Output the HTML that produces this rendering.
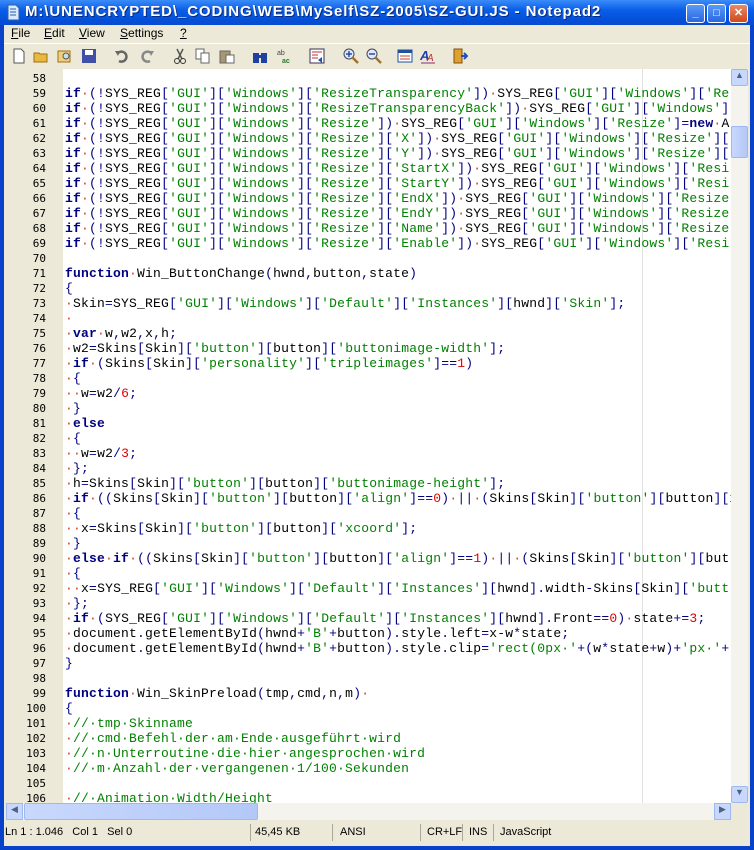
<!DOCTYPE html><html><head><meta charset="utf-8"><style>
*{margin:0;padding:0;box-sizing:border-box}
body{width:754px;height:850px;overflow:hidden;background:#0842c8;font-family:"Liberation Sans",sans-serif;position:relative}
#title{position:absolute;left:0;top:0;width:754px;height:25px;background:linear-gradient(#3a8cf8,#0a5ee8 40%,#0450d8 80%,#0a4ad0);color:#fff;font:bold 15px "Liberation Sans",sans-serif;letter-spacing:0.9px}
#title .t{position:absolute;left:25px;top:3px;text-shadow:1px 1px #0a2a80;white-space:nowrap}
.tb{position:absolute;top:4px;width:19px;height:19px;border:1px solid #fff;border-radius:3px;background:linear-gradient(#5a9af8,#2a66e0);color:#fff;font:bold 11px sans-serif;text-align:center;line-height:17px;letter-spacing:0}
#win{position:absolute;left:4px;top:25px;width:746px;height:821px;background:#ece9d8}
#menu{position:absolute;left:0;top:0;width:746px;height:17px;font-size:12px;color:#000}
#menu span{position:absolute;top:1px}
#tool{position:absolute;left:0;top:18px;width:746px;height:26px;border-top:1px solid #fff}
.ic{position:absolute;top:4px;width:16px;height:16px}
#ed{position:absolute;left:2px;top:44px;width:742px;height:734px;background:#fff;overflow:hidden}
#gut{position:absolute;left:0;top:0;width:57px;height:734px;background:#ece9d8}
#edge{position:absolute;left:636px;top:0;width:1px;height:734px;background:#e0e0e0}
.ln{position:absolute;left:0;width:40px;text-align:right;font:11px "DejaVu Sans Mono","Liberation Mono",monospace;color:#000;height:15px;line-height:15px}
.cl{position:absolute;left:59px;white-space:pre;font:13px "Liberation Mono",monospace;letter-spacing:0.2px;height:15px;line-height:15px;color:#000}
.k{color:#000080;font-weight:bold}.o{color:#000080}.s{color:#008000}.n{color:#e00000}
i{font-style:normal;color:#d04020}
#vs{position:absolute;left:725px;top:0;width:17px;height:734px;background:#f4f3ee}
#hs{position:absolute;left:2px;top:778px;width:725px;height:17px;background:#f4f3ee}
.sb{position:absolute;background:linear-gradient(90deg,#c8d8fc,#b4c8f8);border:1px solid #a0b8f0;border-radius:2px}
#st{position:absolute;left:0;top:797px;width:746px;height:21px;font-size:11px;color:#000}
#st span{position:absolute;top:4px}
#st b{position:absolute;top:2px;width:1px;height:17px;background:#aca899;font-weight:normal}
</style></head><body>
<div id="title"><svg style="position:absolute;left:5px;top:4px" width="16" height="17"><path d="M3 1h8l3 3v12H3z" fill="#d8e8ff" stroke="#3060a0"/><path d="M5 5h6M5 8h6M5 11h6" stroke="#3060a0"/></svg><span class="t">M:\UNENCRYPTED\_CODING\WEB\MySelf\SZ-2005\SZ-GUI.JS - Notepad2</span>
<div class="tb" style="left:686px">_</div><div class="tb" style="left:707px">□</div><div class="tb" style="left:729px;background:linear-gradient(#e88a6a,#d04818)">✕</div></div>
<div id="win">
<div id="menu"><span style="left:7px"><u>F</u>ile</span><span style="left:40px"><u>E</u>dit</span><span style="left:75px"><u>V</u>iew</span><span style="left:116px"><u>S</u>ettings</span><span style="left:176px"><u>?</u></span></div>
<div id="tool">
<svg class="ic" style="left:7px" viewBox="0 0 16 16"><path d="M3 1h7l3 3v11H3z" fill="#fff" stroke="#555"/></svg>
<svg class="ic" style="left:29px" viewBox="0 0 16 16"><path d="M1 5h5l1 1h7v8H1z" fill="#e8b840" stroke="#a07010"/></svg>
<svg class="ic" style="left:53px" viewBox="0 0 16 16"><path d="M1 3h12v11H1z" fill="#f0d080" stroke="#a07010"/><circle cx="9" cy="8" r="3" fill="#cde" stroke="#555"/></svg>
<svg class="ic" style="left:77px" viewBox="0 0 16 16"><rect x="1" y="1" width="14" height="14" fill="#4050a8"/><rect x="4" y="2" width="8" height="5" fill="#fff"/></svg>
<svg class="ic" style="left:110px" viewBox="0 0 16 16"><path d="M4 5a5 5 0 1 1 1 8" fill="none" stroke="#666" stroke-width="2.5"/><path d="M1 3l5 0-2 5z" fill="#666"/></svg>
<svg class="ic" style="left:135px" viewBox="0 0 16 16"><path d="M12 5a5 5 0 1 0-1 8" fill="none" stroke="#888" stroke-width="2.5"/><path d="M15 3l-5 0 2 5z" fill="#888"/></svg>
<svg class="ic" style="left:168px" viewBox="0 0 16 16"><path d="M5 1l5 10M11 1L6 11" stroke="#555" stroke-width="1.5"/><circle cx="5" cy="13" r="2.5" fill="none" stroke="#333"/><circle cx="11" cy="13" r="2.5" fill="none" stroke="#333"/></svg>
<svg class="ic" style="left:191px" viewBox="0 0 16 16"><rect x="1" y="1" width="8" height="10" fill="#fff" stroke="#666"/><rect x="6" y="5" width="8" height="10" fill="#fff" stroke="#666"/></svg>
<svg class="ic" style="left:215px" viewBox="0 0 16 16"><rect x="1" y="3" width="10" height="12" fill="#a89870" stroke="#666"/><rect x="7" y="7" width="8" height="8" fill="#fff" stroke="#666"/></svg>
<svg class="ic" style="left:248px" viewBox="0 0 16 16"><rect x="1" y="5" width="6" height="10" fill="#2040a0"/><rect x="9" y="5" width="6" height="10" fill="#2040a0"/><rect x="6" y="7" width="4" height="3" fill="#2040a0"/></svg>
<svg class="ic" style="left:272px" viewBox="0 0 16 16"><text x="1" y="7" font-size="7" fill="#444">ab</text><text x="6" y="15" font-size="7" fill="#2a7a2a" font-weight="bold">ac</text></svg>
<svg class="ic" style="left:305px" viewBox="0 0 16 16"><rect x="1" y="1" width="14" height="14" fill="#fff" stroke="#335"/><path d="M3 4h10M3 7h6M3 10h6" stroke="#c03030"/><path d="M9 12l4-3v6z" fill="#2050c0"/></svg>
<svg class="ic" style="left:339px" viewBox="0 0 16 16"><circle cx="6" cy="6" r="5" fill="#dfe8ff" stroke="#445"/><path d="M9 9l6 6" stroke="#a07030" stroke-width="2.5"/><path d="M3 6h6M6 3v6" stroke="#2050a0" stroke-width="1.5"/></svg>
<svg class="ic" style="left:362px" viewBox="0 0 16 16"><circle cx="6" cy="6" r="5" fill="#dfe8ff" stroke="#445"/><path d="M9 9l6 6" stroke="#a07030" stroke-width="2.5"/><path d="M3 6h6" stroke="#2050a0" stroke-width="1.5"/></svg>
<svg class="ic" style="left:393px" viewBox="0 0 16 16"><rect x="1" y="2" width="14" height="12" fill="#fff" stroke="#2050a0"/><rect x="1" y="2" width="14" height="3" fill="#2050a0"/><path d="M3 8h10M3 11h10" stroke="#c04040"/></svg>
<svg class="ic" style="left:416px" viewBox="0 0 16 16"><text x="0" y="12" font-size="13" font-style="italic" font-weight="bold" fill="#2040b0">A</text><text x="7" y="13" font-size="10" font-style="italic" fill="#c03030">A</text><path d="M1 15h14" stroke="#803080"/></svg>
<svg class="ic" style="left:448px" viewBox="0 0 16 16"><rect x="2" y="1" width="8" height="14" fill="#e0a030" stroke="#805010"/><path d="M9 8h6M12 5l3 3-3 3" stroke="#2050c0" stroke-width="2" fill="none"/></svg>
</div>
<div id="ed"><div id="gut"></div><div id="edge"></div>
<div id="L"></div>
<div id="vs"><div style="position:absolute;left:0;top:0;width:17px;height:17px;background:#c8d8fc;border:1px solid #a0b8f0;border-radius:2px;font-size:9px;text-align:center;color:#4d6185">▲</div><div class="sb" style="left:0;top:57px;width:17px;height:32px"></div><div style="position:absolute;left:0;top:717px;width:17px;height:17px;background:#c8d8fc;border:1px solid #a0b8f0;border-radius:2px;font-size:9px;text-align:center;color:#4d6185">▼</div></div>
</div>
<div id="hs"><div style="position:absolute;left:0;top:0;width:17px;height:17px;background:#c8d8fc;border:1px solid #a0b8f0;font-size:9px;text-align:center;color:#4d6185">◀</div><div class="sb" style="left:18px;top:0;width:234px;height:17px"></div><div style="position:absolute;left:708px;top:0;width:17px;height:17px;background:#c8d8fc;border:1px solid #a0b8f0;font-size:9px;text-align:center;color:#4d6185">▶</div></div>
<div id="st"><span style="left:1px">Ln 1 : 1.046 &nbsp; Col 1 &nbsp; Sel 0</span><b style="left:246px"></b><span style="left:251px">45,45 KB</span><b style="left:328px"></b><span style="left:336px">ANSI</span><b style="left:416px"></b><span style="left:423px">CR+LF</span><b style="left:458px"></b><span style="left:465px">INS</span><b style="left:489px"></b><span style="left:496px">JavaScript</span></div>
</div>
<script>
var S=function(t){return '<span class="s">'+t+'</span>'},O=function(t){return '<span class="o">'+t+'</span>'},K=function(t){return '<span class="k">'+t+'</span>'},N=function(t){return '<span class="n">'+t+'</span>'},D='<i>·</i>';
function sr(){var a=[].slice.call(arguments),r='';a.forEach(function(x){r+=O('[')+S("'"+x+"'")+O(']')});return r}
function ifl(parts,rest){return K('if')+D+O('(!')+'SYS_REG'+sr.apply(null,['GUI','Windows'].concat(parts))+O(')')+D+'SYS_REG'+sr('GUI','Windows')+rest}
var L={58:'',
59:ifl(['ResizeTransparency'],O('[')+S("'Re")),
60:ifl(['ResizeTransparencyBack'],''),
61:ifl(['Resize'],sr('Resize')+O('=')+K('new')+D+'A'),
62:ifl(['Resize','X'],sr('Resize')+O('[')),
63:ifl(['Resize','Y'],sr('Resize')+O('[')),
64:ifl(['Resize','StartX'],O('[')+S("'Resi")),
65:ifl(['Resize','StartY'],O('[')+S("'Resi")),
66:ifl(['Resize','EndX'],O('[')+S("'Resize")),
67:ifl(['Resize','EndY'],O('[')+S("'Resize")),
68:ifl(['Resize','Name'],O('[')+S("'Resize")),
69:ifl(['Resize','Enable'],O('[')+S("'Resi")),
70:'',
71:K('function')+D+'Win_ButtonChange'+O('(')+'hwnd'+O(',')+'button'+O(',')+'state'+O(')'),
72:O('{'),
73:D+'Skin'+O('=')+'SYS_REG'+sr('GUI','Windows','Default','Instances')+O('[')+'hwnd'+O(']')+sr('Skin')+O(';'),
74:D,
75:D+K('var')+D+'w'+O(',')+'w2'+O(',')+'x'+O(',')+'h'+O(';'),
76:D+'w2'+O('=')+'Skins'+O('[')+'Skin'+O(']')+sr('button')+O('[')+'button'+O(']')+sr('buttonimage-width')+O(';'),
77:D+K('if')+D+O('(')+'Skins'+O('[')+'Skin'+O(']')+sr('personality','tripleimages')+O('==')+N('1')+O(')'),
78:D+O('{'),79:D+D+'w'+O('=')+'w2'+O('/')+N('6')+O(';'),80:D+O('}'),81:D+K('else'),82:D+O('{'),
83:D+D+'w'+O('=')+'w2'+O('/')+N('3')+O(';'),84:D+O('};'),
85:D+'h'+O('=')+'Skins'+O('[')+'Skin'+O(']')+sr('button')+O('[')+'button'+O(']')+sr('buttonimage-height')+O(';'),
86:D+K('if')+D+O('((')+'Skins'+O('[')+'Skin'+O(']')+sr('button')+O('[')+'button'+O(']')+sr('align')+O('==')+N('0')+O(')')+D+O('||')+D+O('(')+'Skins'+O('[')+'Skin'+O(']')+sr('button')+O('[')+'button'+O('][')+'x',
87:D+O('{'),
88:D+D+'x'+O('=')+'Skins'+O('[')+'Skin'+O(']')+sr('button')+O('[')+'button'+O(']')+sr('xcoord')+O(';'),
89:D+O('}'),
90:D+K('else')+D+K('if')+D+O('((')+'Skins'+O('[')+'Skin'+O(']')+sr('button')+O('[')+'button'+O(']')+sr('align')+O('==')+N('1')+O(')')+D+O('||')+D+O('(')+'Skins'+O('[')+'Skin'+O(']')+sr('button')+O('[')+'but',
91:D+O('{'),
92:D+D+'x'+O('=')+'SYS_REG'+sr('GUI','Windows','Default','Instances')+O('[')+'hwnd'+O('].')+'width'+O('-')+'Skins'+O('[')+'Skin'+O(']')+O('[')+S("'butt"),
93:D+O('};'),
94:D+K('if')+D+O('(')+'SYS_REG'+sr('GUI','Windows','Default','Instances')+O('[')+'hwnd'+O('].')+'Front'+O('==')+N('0')+O(')')+D+'state'+O('+=')+N('3')+O(';'),
95:D+'document'+O('.')+'getElementById'+O('(')+'hwnd'+O('+')+S("'B'")+O('+')+'button'+O(').')+'style'+O('.')+'left'+O('=')+'x'+O('-')+'w'+O('*')+'state'+O(';'),
96:D+'document'+O('.')+'getElementById'+O('(')+'hwnd'+O('+')+S("'B'")+O('+')+'button'+O(').')+'style'+O('.')+'clip'+O('=')+S("'rect(0px·'")+O('+(')+'w'+O('*')+'state'+O('+')+'w'+O(')+')+S("'px·'")+O('+'),
97:O('}'),98:'',
99:K('function')+D+'Win_SkinPreload'+O('(')+'tmp'+O(',')+'cmd'+O(',')+'n'+O(',')+'m'+O(')')+D,
100:O('{'),
101:D+S('//·tmp·Skinname'),102:D+S('//·cmd·Befehl·der·am·Ende·ausgeführt·wird'),
103:D+S('//·n·Unterroutine·die·hier·angesprochen·wird'),104:D+S('//·m·Anzahl·der·vergangenen·1/100·Sekunden'),
105:'',106:D+S('//·Animation·Width/Height')};
var h='';for(var n=58;n<=106;n++){var y=(n-58)*15+2;h+='<div class="ln" style="top:'+y+'px">'+n+'</div><div class="cl" style="top:'+y+'px">'+L[n]+'</div>'}
document.getElementById('L').innerHTML=h;
</script>
</body></html>
